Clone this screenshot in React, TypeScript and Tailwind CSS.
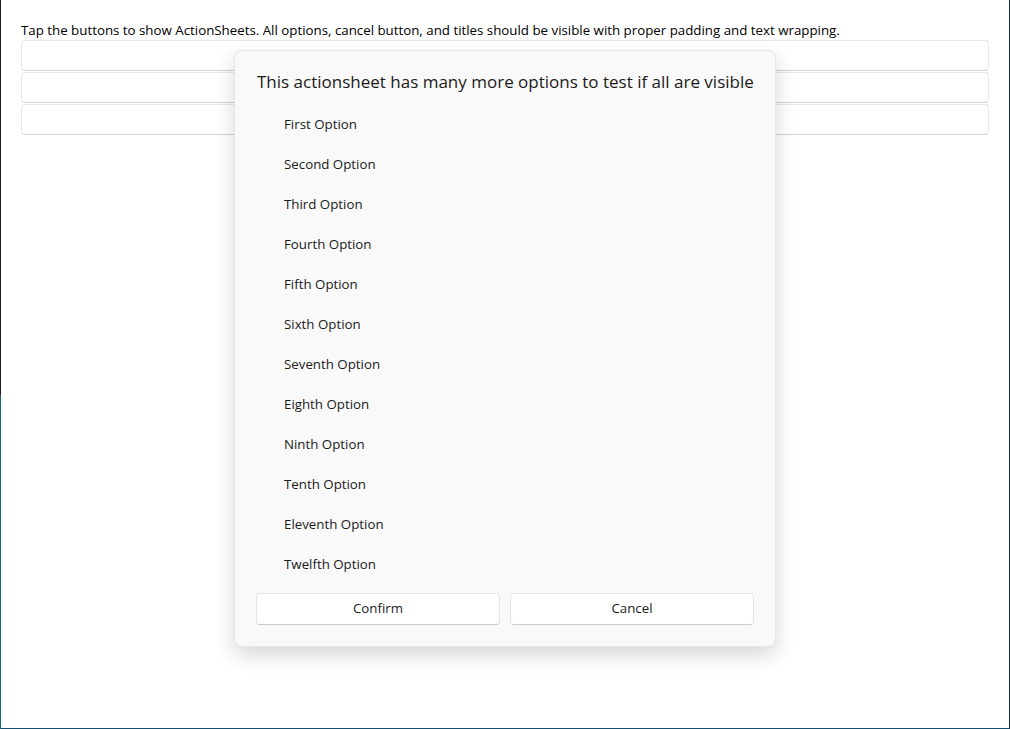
const options = [
  "First Option",
  "Second Option",
  "Third Option",
  "Fourth Option",
  "Fifth Option",
  "Sixth Option",
  "Seventh Option",
  "Eighth Option",
  "Ninth Option",
  "Tenth Option",
  "Eleventh Option",
  "Twelfth Option",
];

function ActionSheet() {
  return (
    <div className="absolute left-[234px] top-[50px] w-[542px] h-[597px] rounded-[8px] border border-[#e6e6e6] bg-[#f9f9f9] shadow-[0_8px_20px_rgba(0,0,0,0.16)] px-[21px] pt-[17px]">
      <h2 className="text-[17px] leading-[28px] text-[#1b1b1b] px-px whitespace-nowrap">
        This actionsheet has many more options to test if all are visible
      </h2>
      <ul className="mt-[9px]">
        {options.map((o) => (
          <li key={o} className="h-[40px] flex items-center pl-[28px] text-[13.3px] text-[#1b1b1b]">
            {o}
          </li>
        ))}
      </ul>
      <div className="mt-[8px] flex gap-[10px]">
        <button className="flex-1 h-[32px] rounded-[4px] border border-[#e5e5e5] border-b-[#cccccc] bg-white text-[13.3px] text-[#1b1b1b]">
          Confirm
        </button>
        <button className="flex-1 h-[32px] rounded-[4px] border border-[#e5e5e5] border-b-[#cccccc] bg-white text-[13.3px] text-[#1b1b1b]">
          Cancel
        </button>
      </div>
    </div>
  );
}

export default function App() {
  return (
    <div
      className="relative flex w-[1010px] h-[729px] bg-white overflow-hidden"
      style={{ fontFamily: '"Open Sans", "Noto Sans", sans-serif' }}
    >
      <div className="flex w-px flex-col">
        <div className="h-[395px] bg-[#1e1e1e]" />
        <div className="flex-1 bg-[#14667a]" />
      </div>
      <div className="flex flex-1 flex-col border-b border-[#17506e]">
        <div className="flex-1 px-[20px] pt-[20px]">
          <p className="text-[13.3px] leading-[20px] text-[#000000]">
            Tap the buttons to show ActionSheets. All options, cancel button, and titles should be visible with proper padding and text wrapping.
          </p>
          <div className="flex flex-col gap-[1px]">
            {[0, 1, 2].map((i) => (
              <button
                key={i}
                className="h-[31px] rounded-[4px] border border-[#e8e8e8] border-b-[#d0d0d0] bg-white"
              />
            ))}
          </div>
        </div>
      </div>
      <div className="w-px bg-[#1c2f58]" />
      <ActionSheet />
    </div>
  );
}
